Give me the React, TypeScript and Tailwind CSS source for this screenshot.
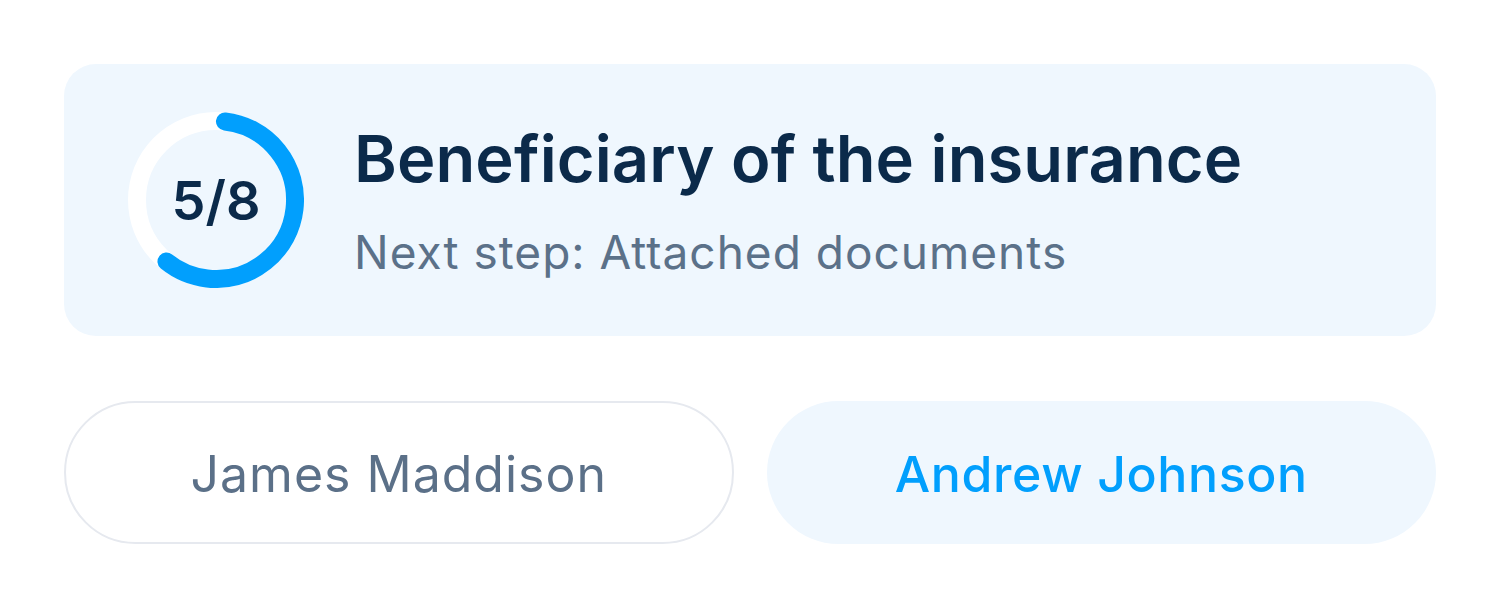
import React from 'react'

const ProgressRing = ({ step, total }: { step: number; total: number }) => {
  const r = 79
  const c = 2 * Math.PI * r
  // leave room for the round caps so the visible arc is step/total
  const capDeg = 6.5
  const arcDeg = (step / total) * 360 - capDeg * 2
  const dash = (arcDeg / 360) * c

  return (
    <div className="relative w-[176px] h-[176px] shrink-0">
      <svg width="176" height="176" viewBox="0 0 176 176" className="absolute inset-0">
        <circle cx="88" cy="88" r={r} fill="none" stroke="#ffffff" strokeWidth="18" />
        <circle
          cx="88"
          cy="88"
          r={r}
          fill="none"
          stroke="#019ffd"
          strokeWidth="18"
          strokeLinecap="round"
          strokeDasharray={`${dash} ${c}`}
          transform={`rotate(${-90 + capDeg} 88 88)`}
        />
      </svg>
      <div className="absolute inset-0 flex items-center justify-center text-[54px] font-semibold text-[#0b2a4a]">
        {step}/{total}
      </div>
    </div>
  )
}

export default function App() {
  return (
    <div className="w-[1500px] h-[608px] bg-white px-16 pt-16 font-['Inter','Liberation_Sans',sans-serif]">
      <div className="flex items-center gap-[50px] rounded-[32px] bg-[#eff7fe] px-16 py-12">
        <ProgressRing step={5} total={8} />
        <div className="flex flex-col">
          <h1 className="text-[65px] leading-[78px] font-semibold text-[#0b2a4a] tracking-[0.1px]">Beneficiary of the insurance</h1>
          <p className="mt-[26px] text-[46px] leading-[56px] text-[#5b7189] tracking-[1px]">Next step: Attached documents</p>
        </div>
      </div>

      <div className="mt-[65px] grid grid-cols-2 gap-[33px]">
        <button className="h-[143px] pt-[4px] rounded-full border-2 border-[#e6e9ef] bg-white text-[50px] text-[#5b7088] tracking-[1px]">
          James Maddison
        </button>
        <button className="h-[143px] pt-[4px] rounded-full bg-[#eff7fe] text-[50px] font-medium text-[#019ffd] tracking-[0.6px]">
          Andrew Johnson
        </button>
      </div>
    </div>
  )
}
